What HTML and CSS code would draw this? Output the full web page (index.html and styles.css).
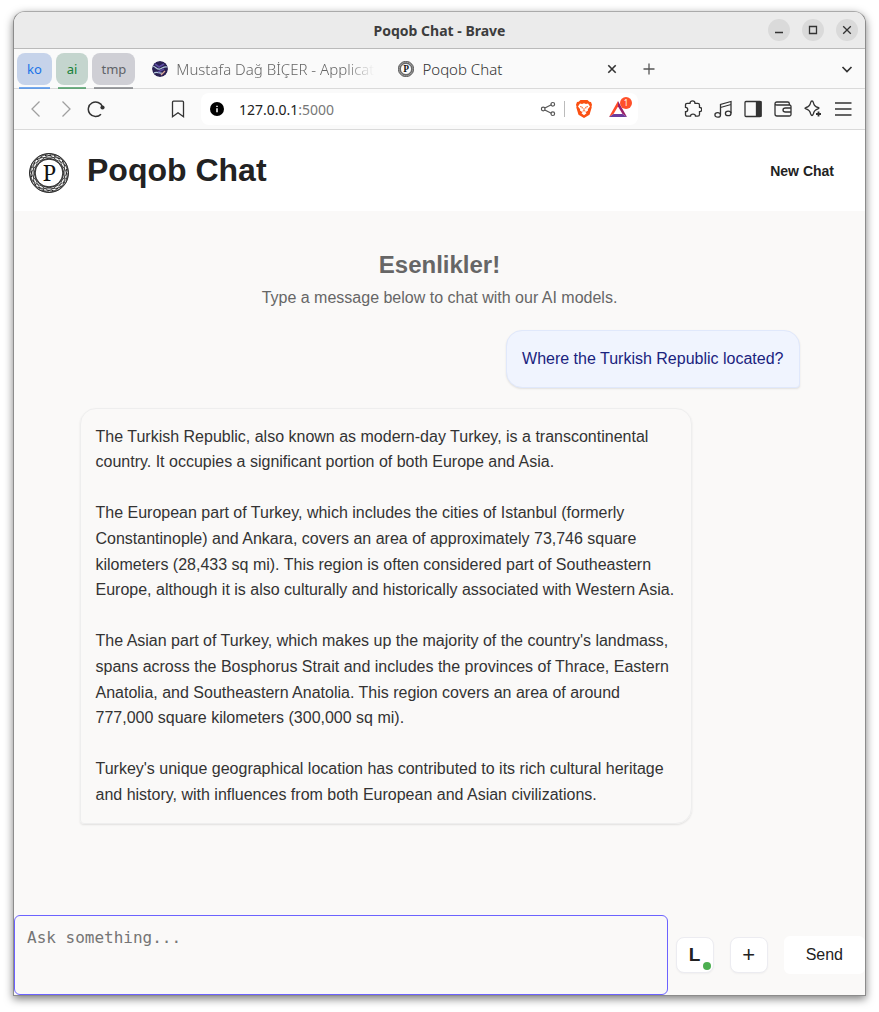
FILE: index.html
```html
<!DOCTYPE html>
<html lang="en">
<head>
<meta charset="utf-8">
<title>Poqob Chat</title>
<link rel="stylesheet" href="styles.css">
</head>
<body>
<div class="window">
  <div class="titlebar">
    <span class="titlebar-text">Poqob Chat - Brave</span>
    <div class="window-buttons">
      <button class="window-button" aria-label="Minimize"><svg viewBox="0 0 22 22"><path d="M7 13.5h8"/></svg></button>
      <button class="window-button" aria-label="Maximize"><svg viewBox="0 0 22 22"><path d="M7.5 7.5h7v7h-7z"/></svg></button>
      <button class="window-button" aria-label="Close"><svg viewBox="0 0 22 22"><path d="M7.2 7.2l7.6 7.6M14.8 7.2l-7.6 7.6"/></svg></button>
    </div>
  </div>

  <div class="tabs">
    <button class="group group-blue">ko</button>
    <button class="group group-green">ai</button>
    <button class="group group-gray">tmp</button>
    <div class="tab tab-first">
      <svg class="favicon favicon-round" viewBox="0 0 16 16"><circle cx="8" cy="8" r="8" fill="#292052" stroke="none"/><path d="M1 5c3 1 4 4 7 3s4-3 7-2M2 12c3-2 5 1 8 0" stroke="#b4cadd" stroke-width="1.3"/><path d="M3 3l4 3 5-3M6 11l6-3" stroke="#5a4aa0" stroke-width="1.6"/><path d="M9 14l4-4" stroke="#dba797"/></svg>
      <span class="tab-title tab-fade">Mustafa Dağ BİÇER - Applicat</span>
    </div>
    <div class="tab tab-active">
      <svg class="favicon" viewBox="0 0 40 40"><use href="#rings"/><text x="20" y="28" text-anchor="middle" class="seal-letter seal-letter-bold">P</text></svg>
      <span class="tab-title">Poqob Chat</span>
      <button class="icon-button" aria-label="Close tab"><svg class="small-icon" viewBox="0 0 12 12"><path d="M2.3 2.3l7.4 7.4M9.7 2.3L2.3 9.7" stroke-width="1.6"/></svg></button>
    </div>
    <button class="icon-button new-tab" aria-label="New tab"><svg class="small-icon" viewBox="0 0 12 12"><path d="M6 .5v11M.5 6h11" stroke="#555"/></svg></button>
    <button class="icon-button tab-search" aria-label="Search tabs"><svg class="small-icon" viewBox="0 0 12 12"><path d="M1.5 4L6 8.5 10.5 4" stroke-width="1.7"/></svg></button>
  </div>

  <div class="toolbar">
    <div class="nav">
      <button class="icon-button faded" aria-label="Back"><svg class="icon" viewBox="0 0 18 18"><path d="M12.5 1.5L5 9l7.5 7.5"/></svg></button>
      <button class="icon-button faded" aria-label="Forward"><svg class="icon" viewBox="0 0 18 18"><path d="M5.5 1.5L13 9l-7.5 7.5"/></svg></button>
      <button class="icon-button" aria-label="Reload"><svg class="icon" viewBox="0 0 18 18"><path d="M14 14.2a7.3 7.3 0 1 1 1.5-7.4" stroke-width="1.5"/><circle cx="15.5" cy="7.5" r="2.1" fill="#333" stroke="none"/></svg></button>
    </div>
    <button class="icon-button bookmark" aria-label="Bookmark"><svg class="icon" viewBox="0 0 18 18"><path d="M4.5 1.2h9q1 0 1 1v14.5L9 12.7l-5.500 4V2.200q0-1 1-1z"/></svg></button>
    <div class="address">
      <svg class="info" viewBox="0 0 14 14"><circle cx="7" cy="7" r="7" fill="#000" stroke="none"/><path d="M7 6.200v4M7 3.700v1.300" stroke="#fff" stroke-width="1.500"/></svg>
      <span class="url">127.0.0.1<span class="port">:5000</span></span>
      <button class="icon-button share" aria-label="Share"><svg class="share-icon" viewBox="0 0 16 16"><path d="M4.800 7l6.500-3.200M4.800 9l6.500 3.200"/><circle cx="3.200" cy="8" r="1.800"/><circle cx="12.800" cy="3.300" r="1.800"/><circle cx="12.800" cy="12.700" r="1.800"/></svg></button>
      <span class="divider"></span>
      <button class="icon-button shield" aria-label="Brave Shields"><svg class="icon" viewBox="0 0 18 18"><path d="M5.500 0h7L14.300 1.800l1.700.3 1 2.700-.5 1.700.2 1-2.200 7.200L9 18l-5.500-3.300L1.300 7.500l.2-1L1 4.800l1-2.700 1.700-.3z" fill="#fb5012" stroke="none"/><path d="M5 3.500l2 .4L9 3.300l2 .6 2-.4 2 3-2.200 2.800.2 1.200-2.500 1.700 1 1.100L9 15.300l-2.500-2 1-1.100L5 10.500l.2-1.200L3 6.500z" fill="#fff" stroke="none"/><path d="M5 6.500l2.500.8-.3 1.300M13 6.500l-2.500.8.3 1.300M9 8v2.700M7.500 11.200L9 10.700l1.500.5" stroke="#fb5012" stroke-width=".8"/></svg></button>
      <button class="icon-button rewards" aria-label="Rewards"><svg class="icon" viewBox="0 0 18 18"><g stroke="none"><path d="M9 1v5.500L4.500 14 0 17z" fill="#ff4a27"/><path d="M9 1l9 16-4.500-3L9 6.500z" fill="#98206a"/><path d="M0 17l4.500-3h9l4.500 3z" fill="#6b3c9c"/></g></svg><span class="badge">1</span></button>
    </div>
    <div class="tools">
      <button class="icon-button" aria-label="Extensions"><svg class="icon" viewBox="0 0 18 18"><path d="M1.500 5Q1.500 3.300 3.200 3.300H6C6 0 11 0 11 3.300h2.800q1.700 0 1.700 1.700v2.300c3 0 3 4.400 0 4.400v2.800q0 1.700-1.700 1.700h-2.300c0-2.700-5-2.700-5 0H3.200q-1.700 0-1.700-1.700v-2.800c3 0 3-4.400 0-4.400z"/></svg></button>
      <button class="icon-button" aria-label="Playlist"><svg class="icon" viewBox="0 0 18 18"><path d="M6.500 14.800V4.500L17 1.500v11.800M6.500 7.500L17 4.500"/><ellipse cx="3.700" cy="14.900" rx="2.800" ry="2.200"/><ellipse cx="14.200" cy="13.400" rx="2.800" ry="2.200"/></svg></button>
      <button class="icon-button" aria-label="Sidebar"><svg class="icon" viewBox="0 0 18 18"><rect x="1" y="1.500" width="16" height="15" rx="1"/><path d="M12.500 2h4.500v14h-4.500z" fill="#333"/></svg></button>
      <button class="icon-button" aria-label="Wallet"><svg class="icon" viewBox="0 0 18 18"><path d="M1 4v10q0 2 2 2h12.500q1.500 0 1.500-1.500V6.500Q17 5 15.500 5H2.800Q1 5 1 3.500T2.800 2h11q1.500 0 1.500 1.500V5M17 8h-5.500q-2.500 0-2.500 2t2.500 2H17"/></svg></button>
      <button class="icon-button" aria-label="Leo"><svg class="icon" viewBox="0 0 18 18"><path d="M8 1q1 0 1.300 1.300Q10.200 6.500 14 7.500q2 .5 0 1.400Q10.200 9.900 9.300 14 8 17 6.700 14 5.800 9.900 2 8.900q-2-.7 0-1.400Q5.800 6.500 6.700 2.300 7 1 8 1z"/><path d="M14.500 11.500v5M12 14h5" stroke-width="1.800"/></svg></button>
      <button class="icon-button" aria-label="Menu"><svg class="icon" viewBox="0 0 18 18"><path d="M1 3h16.500M1 9h16.500M1 15h16.500"/></svg></button>
    </div>
  </div>

  <header class="header">
    <svg class="logo" viewBox="0 0 40 40" role="img" aria-label="Poqob logo">
      <g id="rings" stroke="#222" stroke-width=".7" fill="none">
        <circle cx="20" cy="20" r="19.500" stroke-width=".9"/>
        <circle cx="20" cy="20" r="13.800" stroke-width=".8"/>
        <ellipse cx="20" cy="20" rx="19.300" ry="14"/>
        <ellipse cx="20" cy="20" rx="19.300" ry="14" transform="rotate(30 20 20)"/>
        <ellipse cx="20" cy="20" rx="19.300" ry="14" transform="rotate(60 20 20)"/>
        <ellipse cx="20" cy="20" rx="19.300" ry="14" transform="rotate(90 20 20)"/>
        <ellipse cx="20" cy="20" rx="19.300" ry="14" transform="rotate(120 20 20)"/>
        <ellipse cx="20" cy="20" rx="19.300" ry="14" transform="rotate(150 20 20)"/>
        <circle cx="20" cy="20" r="17.800" stroke-width="1.200" stroke-dasharray="1.500 3.160"/>
      </g>
      <text x="20.500" y="28" text-anchor="middle" class="seal-letter">P</text>
    </svg>
    <h1 class="brand">Poqob Chat</h1>
    <button class="new-chat">New Chat</button>
  </header>

  <main class="chat">
    <h2 class="greeting">Esenlikler!</h2>
    <p class="hint">Type a message below to chat with our AI models.</p>
    <div class="messages">
      <div class="message message-user">Where the Turkish Republic located?</div>
      <div class="message message-bot">The Turkish Republic, also known as modern-day Turkey, is a transcontinental country. It occupies a significant portion of both Europe and Asia.

The European part of Turkey, which includes the cities of Istanbul (formerly Constantinople) and Ankara, covers an area of approximately 73,746 square kilometers (28,433 sq mi). This region is often considered part of Southeastern Europe, although it is also culturally and historically associated with Western Asia.

The Asian part of Turkey, which makes up the majority of the country's landmass, spans across the Bosphorus Strait and includes the provinces of Thrace, Eastern Anatolia, and Southeastern Anatolia. This region covers an area of around 777,000 square kilometers (300,000 sq mi).

Turkey's unique geographical location has contributed to its rich cultural heritage and history, with influences from both European and Asian civilizations.</div>
    </div>
  </main>

  <form class="composer">
    <textarea class="prompt" aria-label="Message" placeholder="Ask something..."></textarea>
    <div class="actions">
      <button type="button" class="square model">L<span class="status"></span></button>
      <button type="button" class="square add">+</button>
      <button type="button" class="send">Send</button>
    </div>
  </form>
</div>
</body>
</html>
```
FILE: styles.css
```css
* {
  box-sizing: border-box;
}

body {
  margin: 0;
  padding: 11px 13px 16px;
  min-height: 100vh;
  display: flex;
  background: #fff;
  color: #333;
  font-family: "Liberation Sans", Arial, sans-serif;
  font-size: 16px;
}

button {
  margin: 0;
  padding: 0;
  border: 0;
  background: none;
  color: inherit;
  font: inherit;
}

svg {
  display: block;
  fill: none;
  stroke: #333;
  stroke-width: 1.3;
}

.seal-letter {
  font-family: "Noto Serif", "DejaVu Serif", "Liberation Serif", serif;
  font-size: 22px;
  fill: #111;
  stroke: none;
}

.seal-letter-bold {
  font-weight: 700;
}

.window {
  flex: 1;
  min-width: 0;
  display: flex;
  flex-direction: column;
  overflow: hidden;
  border: 1px solid #8c8c8c;
  border-top-color: #aaa;
  border-radius: 12px 12px 0 0;
  background: #faf9f8;
  box-shadow: 0 3px 9px rgba(0, 0, 0, 0.5);
}

.titlebar,
.tabs,
.toolbar {
  font-family: "Noto Sans", "Open Sans", sans-serif;
}

.titlebar {
  height: 37px;
  display: grid;
  grid-template-columns: 1fr auto 1fr;
  align-items: center;
  padding-right: 7px;
  padding-left: 7px;
  background: #ebebeb;
  border-bottom: 1px solid #bababa;
}

.titlebar-text {
  grid-column: 2;
  color: #3d3d3d;
  font-size: 14px;
  font-weight: 700;
}

.window-buttons {
  display: flex;
  justify-content: flex-end;
  gap: 12px;
}

.window-button {
  width: 22px;
  height: 22px;
  border-radius: 50%;
  background: #dadada;
}

.tabs {
  height: 40px;
  display: flex;
  align-items: center;
  padding: 0 10px 0 3px;
  background: #fafafa;
  border-bottom: 1px solid #dadada;
}

.group {
  position: relative;
  height: 32px;
  margin-right: 4px;
  padding: 0 10px;
  border-radius: 8px;
  font-size: 13px;
}

.group::after {
  content: "";
  position: absolute;
  right: 2px;
  bottom: -4px;
  left: 2px;
  height: 2px;
  background: currentColor;
  opacity: 0.6;
}

.group-blue {
  background: #c6d3ea;
  color: #1a73e8;
}

.group-green {
  padding: 0 11px;
  background: #c4d5ce;
  color: #188038;
}

.group-gray {
  padding: 0 9px;
  background: #cfcfd5;
  color: #5f6368;
}

.tab {
  display: flex;
  align-items: center;
  gap: 8px;
  font-size: 15px;
  font-weight: 300;
}

.tab-first {
  margin-left: 13px;
  color: #666;
}

.tab-active {
  width: 220px;
  margin-left: 24px;
}

.tab-active .icon-button {
  margin-left: auto;
}

.tab-title {
  white-space: nowrap;
}

.tab-fade {
  -webkit-mask-image: linear-gradient(to right, #000 86%, transparent);
  mask-image: linear-gradient(to right, #000 86%, transparent);
}

.favicon {
  flex: none;
  width: 16px;
  height: 16px;
}

.favicon-round {
  border-radius: 50%;
}

.icon-button {
  flex: none;
  display: flex;
  position: relative;
}

.icon {
  width: 18px;
  height: 18px;
}

.small-icon {
  width: 12px;
  height: 12px;
}

.new-tab {
  margin-left: 25px;
}

.tab-search {
  margin-right: 2px;
  margin-left: auto;
}

.toolbar {
  height: 41px;
  display: flex;
  align-items: center;
  padding: 0 13px;
  background: #fafafa;
  border-bottom: 1px solid #dadada;
}

.nav {
  display: flex;
  gap: 12px;
}

.faded {
  opacity: 0.45;
}

.bookmark {
  margin: 0 14px 0 64px;
}

.address {
  flex: 1;
  display: flex;
  align-items: center;
  height: 32px;
  padding: 0 11px 0 9px;
  border-radius: 8px;
  background: #fff;
}

.info {
  width: 14px;
  height: 14px;
}

.url {
  flex: 1;
  margin-left: 15px;
  color: #222;
  font-size: 14px;
}

.port {
  color: #777;
}

.share-icon {
  width: 16px;
  height: 16px;
  stroke: #555;
  stroke-width: 1.2;
}

.divider {
  width: 1px;
  height: 16px;
  margin: 0 10px 0 8px;
  background: #bbb;
}

.rewards {
  margin-left: 16px;
}

.badge {
  position: absolute;
  top: -3px;
  right: -5px;
  width: 12px;
  height: 12px;
  border-radius: 50%;
  background: #ff5029;
  color: #fff;
  font-size: 8px;
  line-height: 12px;
  text-align: center;
}

.tools {
  display: flex;
  gap: 12px;
  margin-left: 46px;
}

.header {
  display: flex;
  align-items: center;
  min-height: 81px;
  padding: 0 31px 0 15px;
  background: #fff;
}

.logo {
  width: 40px;
  height: 40px;
  margin-top: 4px;
}

.brand {
  flex: 1;
  margin: 0 0 2px 18px;
  color: #222;
  font-size: 32px;
  line-height: 40px;
}

.new-chat {
  color: #222;
  font-size: 14px;
  font-weight: 700;
}

.chat {
  flex: 1;
  padding: 40px 65px 20px;
  text-align: center;
}

.greeting {
  margin: 0 0 7px;
  color: #666;
  font-size: 24px;
  line-height: 28px;
}

.hint {
  margin: 0 0 20px;
  color: #666;
  line-height: 24px;
}

.messages {
  display: flex;
  flex-direction: column;
  gap: 20px;
  max-width: 720px;
  margin: 0 auto;
  text-align: left;
}

.message {
  max-width: 85%;
  padding: 15px;
  border: 1px solid #eee;
  border-radius: 16px;
  box-shadow: 0 1px 2px rgba(0, 0, 0, 0.1);
  line-height: 1.6;
  white-space: pre-wrap;
}

.message-user {
  align-self: flex-end;
  background: #f0f4fe;
  border-color: #e0e8fb;
  border-bottom-right-radius: 4px;
  color: #1a237e;
}

.message-bot {
  align-self: flex-start;
  border-bottom-left-radius: 4px;
}

.composer {
  display: flex;
  align-items: center;
  gap: 8px;
}

.prompt {
  flex: 1;
  min-width: 0;
  height: 80px;
  padding: 12px;
  border: 1px solid #6c63ff;
  border-radius: 6px;
  outline: none;
  resize: none;
  background: #faf9f8;
  font-family: "DejaVu Sans Mono", monospace;
  font-size: 16px;
}

.prompt::placeholder {
  color: #757575;
}

.actions {
  display: flex;
  align-items: center;
  gap: 16px;
}

.square {
  position: relative;
  display: grid;
  place-items: center;
  width: 38px;
  height: 36px;
  border: 1px solid #ececf1;
  border-radius: 8px;
  background: #fff;
  box-shadow: 0 1px 2px rgba(0, 0, 0, 0.04);
  color: #222;
}

.model {
  font-size: 19px;
  font-weight: 700;
}

.add {
  font-size: 22px;
}

.status {
  position: absolute;
  right: 2px;
  bottom: 2px;
  width: 8px;
  height: 8px;
  border-radius: 50%;
  background: #4caf50;
}

.send {
  height: 38px;
  padding: 0 22px;
  border-radius: 6px;
  background: #fff;
  color: #222;
}
```
